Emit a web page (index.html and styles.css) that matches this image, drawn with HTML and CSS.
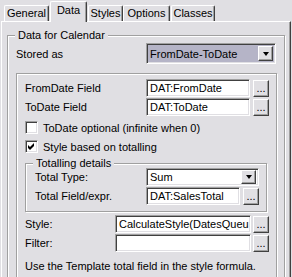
FILE: index.html
```html
<!DOCTYPE html>
<html lang="en">

<head>
    <meta charset="UTF-8">
    <meta name="viewport" content="width=device-width, initial-scale=1.0">
    <title>Data for Calendar</title>

    <link rel="stylesheet" href="styles.css">
</head>

<body>
    <div class="window">
        <nav class="tabs">
            <span class="tab tab-general">General</span>
            <span class="tab tab-data active">Data</span>
            <span class="tab tab-styles">Styles</span>
            <span class="tab tab-options">Options</span>
            <span class="tab tab-classes">Classes</span>
        </nav>
        <section class="panel">
            <div class="group">
                <span class="legend">Data for Calendar</span>
                <div class="row stored">
                    <label class="label">Stored as</label>
                    <div class="combo selected">
                        <span class="value">FromDate-ToDate</span>
                        <span class="drop"><i></i></span>
                    </div>
                </div>
                <div class="box">
                    <div class="row field">
                        <label class="label">FromDate Field</label>
                        <span class="edit">DAT:FromDate</span>
                        <span class="btn">...</span>
                    </div>
                    <div class="row field">
                        <label class="label">ToDate Field</label>
                        <span class="edit">DAT:ToDate</span>
                        <span class="btn">...</span>
                    </div>
                    <div class="check first">
                        <span class="checkbox"></span>
                        <span>ToDate optional (infinite when 0)</span>
                    </div>
                    <div class="check">
                        <span class="checkbox">
                            <svg width="7" height="7" viewBox="0 0 7 7">
                                <polygon points="0,2 2,4 6,0 6,3 2,7 0,5" fill="#000" />
                            </svg>
                        </span>
                        <span>Style based on totalling</span>
                    </div>
                    <div class="totals">
                        <span class="legend">Totalling details</span>
                        <div class="row field">
                            <label class="label">Total Type:</label>
                            <div class="combo">
                                <span class="value">Sum</span>
                                <span class="drop"><i></i></span>
                            </div>
                        </div>
                        <div class="row field">
                            <label class="label">Total Field/expr.</label>
                            <span class="edit">DAT:SalesTotal</span>
                            <span class="btn">...</span>
                        </div>
                    </div>
                    <div class="row field style-row">
                        <label class="label">Style:</label>
                        <span class="edit">CalculateStyle(DatesQueu</span>
                        <span class="btn">...</span>
                    </div>
                    <div class="row field filter-row">
                        <label class="label">Filter:</label>
                        <span class="edit"></span>
                        <span class="btn">...</span>
                    </div>
                    <p class="note">Use the Template total field in the style formula.</p>
                </div>
            </div>
        </section>
    </div>
</body>

</html>
```
FILE: styles.css
```css
* {
    padding: 0;
    margin: 0;
    box-sizing: border-box;
}

body {
    background-color: #e0dfe3;
    font-family: "Liberation Sans", Arial, sans-serif;
    font-size: 11px;
    color: #000;
}

.window {
    width: 292px;
    height: 277px;
    overflow: hidden;
}

/* tab strip */
.tabs {
    display: flex;
    align-items: flex-end;
    height: 21px;
}

.tab {
    display: block;
    height: 16px;
    padding-top: 1px;
    text-align: center;
    line-height: 12px;
    border-top: 1px solid #fff;
    border-left: 1px solid #fff;
    border-right: 1px solid #404040;
    border-radius: 2px 2px 0 0;
    box-shadow: inset -1px 0 #a0a0a0;
    background-color: #e0dfe3;
}

.tab-general {
    margin-left: 4px;
    width: 45px;
}

.tab-data {
    margin-left: 1px;
    width: 37px;
}

.tab-styles {
    margin-left: 1px;
    width: 35px;
}

.tab-options {
    width: 47px;
}

.tab-classes {
    margin-left: 1px;
    width: 44px;
}

.tab.active {
    position: relative;
    z-index: 1;
    height: 21px;
    margin-bottom: -1px;
    padding-top: 2px;
}

/* page */
.panel {
    margin-left: 1px;
    width: 290px;
    height: 256px;
    padding: 13px 0 0 5px;
    border-top: 1px solid #fff;
    border-left: 1px solid #fff;
    border-right: 1px solid #404040;
    box-shadow: inset -1px 0 #a0a0a0;
}

.group,
.box,
.totals {
    position: relative;
    border: 1px solid #a0a0a0;
    box-shadow: inset 1px 1px #fff, 1px 1px #fff;
}

.group {
    width: 278px;
    height: 260px;
    padding: 7px 0 0 8px;
}

.legend {
    position: absolute;
    top: -7px;
    left: 7px;
    padding: 0 3px;
    line-height: 13px;
    background-color: #e0dfe3;
}

.row {
    display: flex;
    align-items: center;
}

.label {
    display: block;
    flex-shrink: 0;
}

.stored {
    height: 21px;
}

.stored .label {
    width: 130px;
}

.stored .combo {
    width: 130px;
    height: 21px;
}

.box {
    width: 261px;
    height: 220px;
    margin-top: 9px;
    padding: 5px 0 0 8px;
}

.field {
    height: 18px;
    margin-bottom: 1px;
}

.field .label {
    width: 121px;
}

/* sunken controls */
.edit,
.combo,
.checkbox {
    display: block;
    background-color: #fff;
    border: 1px solid;
    border-color: #a0a0a0 #fff #fff #a0a0a0;
    box-shadow: inset 1px 1px #404040, inset -1px -1px #e0dfe3;
}

.edit {
    width: 104px;
    height: 18px;
    padding: 0 3px;
    line-height: 16px;
    white-space: nowrap;
    overflow: hidden;
}

.btn {
    display: block;
    width: 16px;
    height: 17px;
    margin-left: 3px;
    text-align: center;
    line-height: 14px;
    border: 1px solid;
    border-color: #fff #404040 #404040 #fff;
    box-shadow: inset -1px -1px #a0a0a0;
}

.combo {
    display: flex;
    align-items: center;
    justify-content: space-between;
    padding: 2px 2px 2px 3px;
}

.combo.selected {
    background-color: #b5b4c7;
}

.combo .drop {
    display: flex;
    align-items: center;
    justify-content: center;
    width: 15px;
    height: 100%;
    background-color: #e0dfe3;
    border: 1px solid;
    border-color: #fff #404040 #404040 #fff;
    box-shadow: inset -1px -1px #a0a0a0;
}

.combo .drop i {
    display: block;
    border-top: 4px solid #000;
    border-left: 3.5px solid transparent;
    border-right: 3.5px solid transparent;
}

/* check boxes */
.check {
    display: flex;
    align-items: center;
    gap: 5px;
    height: 19px;
}

.check.first {
    margin-top: 2px;
}

.checkbox {
    display: flex;
    align-items: center;
    justify-content: center;
    width: 13px;
    height: 13px;
}

/* totalling details */
.totals {
    width: 242px;
    margin-top: 7px;
    padding: 4px 0 6px 9px;
}

.totals .field .label {
    width: 111px;
}

.totals .combo {
    width: 113px;
    height: 18px;
    padding: 1px 2px 1px 3px;
}

.totals .edit {
    width: 94px;
}

.totals .field:last-child {
    margin-bottom: 0;
}

.style-row {
    margin-top: 3px;
}

.style-row .label,
.filter-row .label {
    width: 90px;
}

.style-row .edit,
.filter-row .edit {
    width: 136px;
}

.style-row .btn,
.filter-row .btn {
    margin-left: 2px;
}

.note {
    margin-top: 8px;
    line-height: 13px;
}
```
